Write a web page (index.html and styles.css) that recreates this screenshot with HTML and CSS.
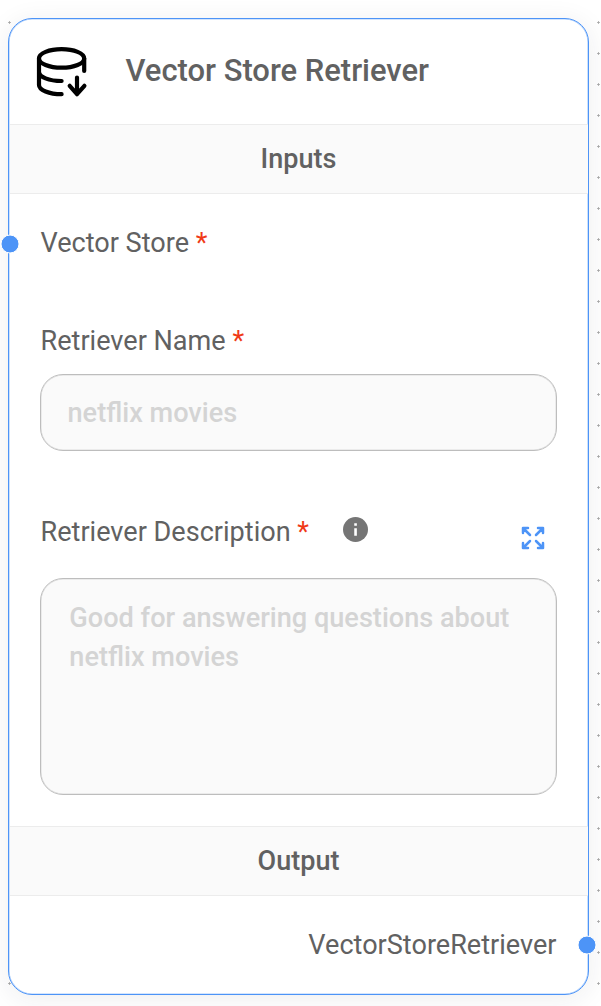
FILE: index.html
```html
<!DOCTYPE html>
<html lang="en">
<head>
<meta charset="utf-8">
<title>Vector Store Retriever</title>
<link rel="stylesheet" href="styles.css">
</head>
<body>
<main class="canvas">
  <article class="node">
    <header class="node-header">
      <svg class="node-icon" viewBox="0 0 52 52" fill="none" stroke="#000" stroke-width="4.2" stroke-linecap="round" stroke-linejoin="round">
        <ellipse cx="25.6" cy="12.4" rx="22.6" ry="9.3"/>
        <path d="M3 12.4V39C3 44 13 48.2 25.6 48.2M3 25.7C3 31 13 35 25.6 35M48.2 12.4V25M41 31.5V48.2M33.7 39.8L41 48.2L48.4 39.8"/>
      </svg>
      <h1 class="node-title">Vector Store Retriever</h1>
    </header>
    <h2 class="section-title">Inputs</h2>
    <div class="inputs">
      <div class="field anchor-row">
        <svg class="handle handle-in" viewBox="0 0 20 20"><circle cx="10" cy="10" r="9" fill="#4d94f7" stroke="#fff"/></svg>
        <span class="label">Vector Store <b class="req">*</b></span>
      </div>
      <div class="field name-field">
        <label class="label" for="name">Retriever Name <b class="req">*</b></label>
        <input class="control" id="name" placeholder="netflix movies">
      </div>
      <div class="field">
        <div class="label-row">
          <label class="label" for="description">Retriever Description <b class="req">*</b></label>
          <svg class="info" viewBox="0 0 24 24"><circle cx="12" cy="12" r="12" fill="#757575"/><path d="M10.8 6h2.5v2.4h-2.5zM10.8 10.8h2.5v7.2h-2.5z" fill="#fff"/></svg>
          <svg class="expand" viewBox="0 0 24 24" fill="none" stroke="#4d94f7" stroke-width="2.5" stroke-linecap="round" stroke-linejoin="round"><path d="M2 7V2H7M2 2L9 9M17 2H22V7M22 2L15 9M2 17V22H7M2 22L9 15M17 22H22V17M22 22L15 15"/></svg>
        </div>
        <textarea class="control area" id="description" placeholder="Good for answering questions about netflix movies"></textarea>
      </div>
    </div>
    <h2 class="section-title">Output</h2>
    <footer class="output">
      <span class="label">VectorStoreRetriever</span>
      <svg class="handle handle-out" viewBox="0 0 20 20"><circle cx="10" cy="10" r="9" fill="#4d94f7" stroke="#fff"/></svg>
    </footer>
  </article>
</main>
</body>
</html>
```

FILE: styles.css
```css
* { box-sizing: border-box; }
body {
  margin: 0;
  font-family: Roboto, sans-serif;
  color: #616161;
}
.canvas {
  height: 1006px;
  padding: 18px 12px 11px 8px;
  overflow: hidden;
  background: #fff radial-gradient(circle, #a8a8a8 0.9px, transparent 1.4px) -6px 7px / 31px 31px;
}
.node {
  height: 977px;
  display: flex;
  flex-direction: column;
  background: #fff;
  border: 1px solid #4d94f7;
  border-radius: 24px;
  box-shadow: 0 4px 27px rgba(32, 40, 45, 0.08), inset 0 0 0 0.6px #a9ccfb;
}
.node-header {
  height: 105px;
  display: flex;
  align-items: center;
  gap: 37.5px;
  padding-left: 27px;
}
.node-icon { width: 52px; height: 52px; }
.node-title {
  margin: -2px 0 0;
  font-size: 30.95px;
  font-weight: 500;
}
.section-title {
  height: 70px;
  margin: 0 0.5px;
  border: solid #ececec;
  border-width: 1px 0;
  background: #fafafa;
  font-size: 27px;
  font-weight: 500;
  line-height: 68px;
  text-align: center;
}
.inputs {
  height: 632px;
  padding: 31px 31px 0;
}
.label {
  display: block;
  padding-left: 0.5px;
  font-size: 27.08px;
  line-height: 36px;
}
.req { color: #f03a17; font-weight: 400; }
.anchor-row { position: relative; height: 98px; }
.name-field { height: 191px; }
.label-row { display: flex; height: 61px; }
.info { width: 25px; height: 25px; margin: 3px 0 0 34px; }
.expand { width: 24px; height: 24px; margin: 12px 12.5px 0 auto; }
.control {
  display: block;
  width: 517px;
  height: 77px;
  margin: 15px 0 0;
  padding: 0 26.5px;
  border: 1px solid #bdbdbd;
  border-radius: 23px;
  outline: 0;
  background: #fafafa;
  box-shadow: inset 0 0 0 0.5px #dcdcdc;
  font: 500 27.13px/39px Roboto, sans-serif;
}
.control::placeholder { color: #d4d4d4; opacity: 1; }
.area {
  height: 217px;
  margin: 3px 0 0;
  padding: 20px 28.3px;
  resize: none;
  overflow: hidden;
}
.output {
  position: relative;
  padding: 31px 31.5px 0;
  text-align: right;
}
.handle {
  position: absolute;
  width: 20px;
  height: 20px;
}
.handle-in { left: -40px; top: 9px; }
.handle-out { right: -9px; top: 39px; }
```
